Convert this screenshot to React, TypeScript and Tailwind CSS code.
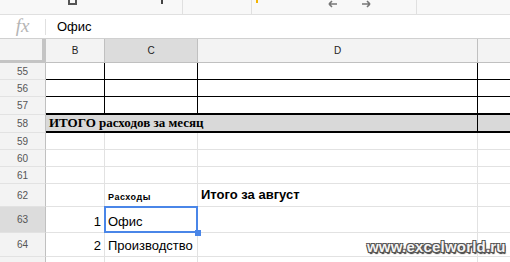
import type { ReactNode } from "react"

const sans = "font-['Liberation_Sans',Arial,sans-serif]"

function RowHead({ n, active }: { n?: number; active?: boolean }) {
  return (
    <div
      className={`w-[46px] shrink-0 flex items-center justify-center border-r border-r-[#c0c0c0] border-b border-b-[#e2e2e2] text-[10px] text-[#555] ${
        active ? "bg-[#dcdcdc]" : "bg-[#f3f3f3]"
      }`}
    >
      {n}
    </div>
  )
}

function Cell({ w, className = "", children }: { w: string; className?: string; children?: ReactNode }) {
  return <div className={`${w} shrink-0 ${className}`}>{children}</div>
}

const grid = "border-r border-b border-r-[#e2e2e2] border-b-[#e2e2e2]"
const black = "border-r border-b border-black"

export default function App() {
  return (
    <div className={`relative w-[510px] h-[262px] overflow-hidden bg-white ${sans}`}>
      {/* toolbar (cut off at top) */}
      <div className="h-[15px] flex bg-[#f8f8f8] border-b border-[#e0e0e0]">
        <div className="w-[68px]" />
        <div className="w-[9px] h-[5px] border-2 border-t-0 border-[#555]" />
        <div className="w-[84px]" />
        <div className="w-[2px] h-[4px] bg-[#444]" />
        <div className="w-[19px]" />
        <div className="w-px bg-[#e0e0e0]" />
        <div className="w-[68px]" />
        <div className="w-px bg-[#e0e0e0]" />
        <div className="w-[4px]" />
        <div className="w-[2px] h-[3px] bg-[#f4b400]" />
        <div className="w-[70px]" />
        <svg width="10" height="8" viewBox="0 0 10 8">
          <path d="M1 4h8M1 4l3-3M1 4l3 3" stroke="#777" strokeWidth="1.6" fill="none" />
        </svg>
        <div className="w-[23px]" />
        <svg width="10" height="8" viewBox="0 0 10 8">
          <path d="M1 4h8M9 4l-3-3M9 4l-3 3" stroke="#777" strokeWidth="1.6" fill="none" />
        </svg>
        <div className="w-[45px]" />
        <div className="w-px bg-[#e0e0e0]" />
      </div>

      {/* formula bar */}
      <div className="h-[24px] flex items-center border-b border-[#d0d0d0]">
        <div className="w-[45px] flex justify-center">
          <span className="font-['Liberation_Serif',serif] italic text-[19px] leading-none text-[#b5b5b5] -mt-[3px]">fx</span>
        </div>
        <div className="w-px h-[16px] bg-[#e0e0e0]" />
        <span className="ml-[11px] text-[13px] text-black">Офис</span>
      </div>

      {/* column headers */}
      <div className="h-[24px] flex text-[10px] text-[#222]">
        <div className="w-[46px] shrink-0 bg-[#f3f3f3] border-r-4 border-b-[3px] border-[#c4c4c4]" />
        <Cell w="w-[59px]" className="bg-[#f3f3f3] border-r border-b border-[#c0c0c0] flex items-center justify-center">B</Cell>
        <Cell w="w-[93px]" className="bg-[#dcdcdc] border-r border-b border-[#c0c0c0] flex items-center justify-center">C</Cell>
        <Cell w="w-[280px]" className="bg-[#f3f3f3] border-r border-b border-[#c0c0c0] flex items-center justify-center">D</Cell>
        <div className="flex-1 bg-[#f3f3f3] border-b border-[#c0c0c0]" />
      </div>

      {/* rows 55-57 */}
      {[55, 56].map((n) => (
        <div key={n} className="h-[17px] flex">
          <RowHead n={n} />
          <Cell w="w-[59px]" className={black} />
          <Cell w="w-[93px]" className={black} />
          <Cell w="w-[280px]" className={black} />
          <div className="flex-1 border-b border-black" />
        </div>
      ))}
      <div className="h-[18px] flex">
        <RowHead n={57} />
        <Cell w="w-[59px]" className="border-r border-b-2 border-black" />
        <Cell w="w-[93px]" className="border-r border-b-2 border-black" />
        <Cell w="w-[280px]" className="border-r border-b-2 border-black" />
        <div className="flex-1 border-b-2 border-black" />
      </div>

      {/* row 58 */}
      <div className="h-[18px] flex">
        <RowHead n={58} />
        <Cell
          w="w-[432px]"
          className="bg-[#d9d9d9] border-r border-b-2 border-black flex items-center pl-[3px] font-['Liberation_Serif',serif] font-bold text-[13px] text-black"
        >
          ИТОГО расходов за месяц
        </Cell>
        <div className="flex-1 bg-[#d9d9d9] border-b-2 border-black" />
      </div>

      {[59, 60, 61].map((n) => (
        <div key={n} className="h-[17px] flex">
          <RowHead n={n} />
          <Cell w="w-[59px]" className={grid} />
          <Cell w="w-[93px]" className={grid} />
          <Cell w="w-[280px]" className={grid} />
          <div className="flex-1 border-b border-[#e2e2e2]" />
        </div>
      ))}

      {/* row 62 */}
      <div className="h-[23px] flex">
        <RowHead n={62} />
        <Cell w="w-[59px]" className={grid} />
        <Cell w="w-[93px]" className={`${grid} flex items-end pl-[3px] pb-[2px] text-[9px] font-bold text-black tracking-[0.5px]`}>
          Расходы
        </Cell>
        <Cell w="w-[280px]" className={`${grid} flex items-end pl-[3px] pb-[2px] text-[13px] font-bold text-black`}>
          Итого за август
        </Cell>
        <div className="flex-1 border-b border-[#e2e2e2]" />
      </div>

      {/* row 63 */}
      <div className="h-[26px] flex">
        <RowHead n={63} active />
        <Cell w="w-[59px]" className={`${grid} flex items-end justify-end pr-[3px] pb-[1px] text-[13px] text-black`}>1</Cell>
        <Cell w="w-[93px]" className={`${grid} relative flex items-end pl-[3px] pb-[1px] text-[13px] text-black`}>
          Офис
          <div className="absolute -left-px -top-px -right-px -bottom-px border-2 border-[#4a86e8]" />
          <div className="absolute -right-[4px] -bottom-[4px] w-[6px] h-[6px] bg-[#4a86e8]" />
        </Cell>
        <Cell w="w-[280px]" className={grid} />
        <div className="flex-1 border-b border-[#e2e2e2]" />
      </div>

      {/* row 64 */}
      <div className="h-[24px] flex">
        <RowHead n={64} />
        <Cell w="w-[59px]" className={`${grid} flex items-end justify-end pr-[3px] pb-[1px] text-[13px] text-black`}>2</Cell>
        <Cell w="w-[93px]" className={`${grid} flex items-end pl-[3px] pb-[1px] text-[13px] text-black`}>Производство</Cell>
        <Cell w="w-[280px]" className={grid} />
        <div className="flex-1 border-b border-[#e2e2e2]" />
      </div>

      {/* row 65, cut off by the window */}
      <div className="h-[20px] flex">
        <RowHead />
        <Cell w="w-[59px]" className={grid} />
        <Cell w="w-[93px]" className={grid} />
        <Cell w="w-[280px]" className={grid} />
        <div className="flex-1" />
      </div>

      {/* watermark */}
      <div className="absolute left-[367px] top-[236px] text-[15px] font-bold text-[#f4f4f4] tracking-[0.2px] [text-shadow:-1px_-1px_0_#555,1px_-1px_0_#555,-1px_1px_0_#555,1px_1px_0_#555,1px_2px_1px_#333]">
        www.excelworld.ru
      </div>
    </div>
  )
}
